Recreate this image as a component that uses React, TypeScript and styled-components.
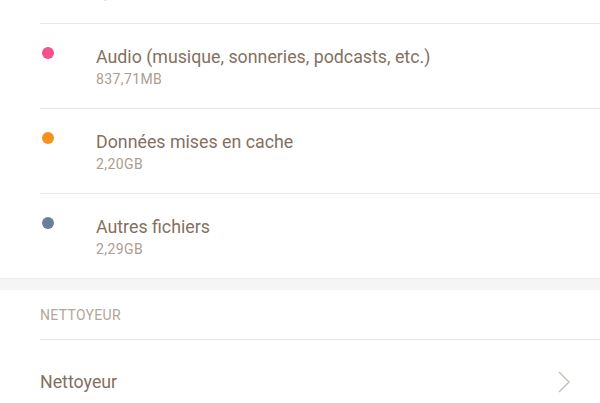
import React from "react";
import styled, { createGlobalStyle } from "styled-components";

const Global = createGlobalStyle`
  html, body { margin: 0; padding: 0; background: #ffffff; overflow: hidden; }
  body { font-family: Roboto, "Noto Sans", Arial, sans-serif; -webkit-font-smoothing: antialiased; }
`;

const Screen = styled.div`
  width: 600px;
  height: 403px;
  overflow: hidden;
  background: #ffffff;
`;

const Scroller = styled.div`
  margin-top: -61px;
`;

const StorageRow = styled.div<{ $last?: boolean }>`
  display: flex;
  align-items: flex-start;
  margin-left: 40px;
  padding: 21px 0 20px 2px;
  border-bottom: ${(p) => (p.$last ? "none" : "1px solid #e9e7e6")};
`;

const Dot = styled.span<{ $color: string }>`
  flex: none;
  width: 12px;
  height: 12px;
  border-radius: 50%;
  margin-top: 2px;
  background: ${(p) => p.$color};
`;

const TextCol = styled.div`
  margin-left: 42px;
  display: flex;
  flex-direction: column;
`;

const Title = styled.div`
  font-size: 17.8px;
  line-height: 24px;
  color: #84705f;
`;

const Sub = styled.div`
  margin-top: 1px;
  font-size: 14px;
  letter-spacing: 0.4px;
  line-height: 18px;
  color: #ab9d92;
`;

const Band = styled.div`
  height: 11px;
  background: #f5f5f5;
  border-top: 1px solid #ededed;
`;

const SectionHeader = styled.div`
  margin-left: 40px;
  padding: 15px 0 14px;
  font-size: 14px;
  letter-spacing: 0.3px;
  line-height: 20px;
  color: #b3a69b;
  border-bottom: 1px solid #e9e7e6;
`;

const NavRow = styled.div`
  display: flex;
  align-items: center;
  justify-content: space-between;
  padding: 30px 30px 20px 40px;
`;

const NavTitle = styled.div`
  font-size: 17.8px;
  line-height: 24px;
  color: #84705f;
`;

const Chevron = () => (
  <svg width="12" height="22" viewBox="0 0 12 22" aria-hidden>
    <path d="M1 1 L11 11 L1 21" fill="none" stroke="#c9bcb2" strokeWidth="1.4" />
  </svg>
);

const items = [
  { color: "#8e8bd6", title: "Images, vidéos", size: "1,54GB" },
  { color: "#f7508f", title: "Audio (musique, sonneries, podcasts, etc.)", size: "837,71MB" },
  { color: "#f7911e", title: "Données mises en cache", size: "2,20GB" },
  { color: "#6c7e99", title: "Autres fichiers", size: "2,29GB" },
];

export default function App() {
  return (
    <Screen>
      <Global />
      <Scroller>
        {items.map((it, i) => (
          <StorageRow key={it.title} $last={i === items.length - 1}>
            <Dot $color={it.color} />
            <TextCol>
              <Title>{it.title}</Title>
              <Sub>{it.size}</Sub>
            </TextCol>
          </StorageRow>
        ))}
        <Band />
        <SectionHeader>NETTOYEUR</SectionHeader>
        <NavRow>
          <NavTitle>Nettoyeur</NavTitle>
          <Chevron />
        </NavRow>
      </Scroller>
    </Screen>
  );
}
